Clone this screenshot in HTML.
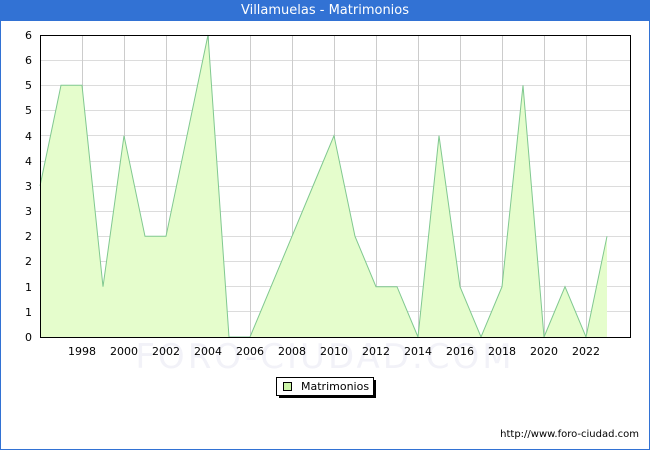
<!DOCTYPE html>
<html><head><style>
body{margin:0;width:650px;height:450px;overflow:hidden;font-family:"DejaVu Sans","Liberation Sans",sans-serif;background:#fff}
.frame{position:absolute;left:0;top:0;width:648px;height:448px;border:1px solid #3272d4}
.title{position:absolute;left:0;top:0;width:650px;height:21px;background:#3272d4;color:#fff;font-size:13px;text-align:center;line-height:22px}
</style></head><body>
<div class="frame"></div>
<div class="title">Villamuelas - Matrimonios</div>
<svg width="650" height="450" style="position:absolute;left:0;top:0" font-family="DejaVu Sans, Liberation Sans, sans-serif" font-size="11">
<g stroke="#dcdcdc" stroke-width="1">
<line x1="40" y1="60.5" x2="630" y2="60.5"/><line x1="40" y1="85.5" x2="630" y2="85.5"/><line x1="40" y1="110.5" x2="630" y2="110.5"/><line x1="40" y1="135.5" x2="630" y2="135.5"/><line x1="40" y1="161.5" x2="630" y2="161.5"/><line x1="40" y1="186.5" x2="630" y2="186.5"/><line x1="40" y1="211.5" x2="630" y2="211.5"/><line x1="40" y1="236.5" x2="630" y2="236.5"/><line x1="40" y1="261.5" x2="630" y2="261.5"/><line x1="40" y1="286.5" x2="630" y2="286.5"/><line x1="40" y1="311.5" x2="630" y2="311.5"/>
</g>
<g stroke="#cccccc"><line x1="82.5" y1="35" x2="82.5" y2="337"/><line x1="124.5" y1="35" x2="124.5" y2="337"/><line x1="166.5" y1="35" x2="166.5" y2="337"/><line x1="208.5" y1="35" x2="208.5" y2="337"/><line x1="250.5" y1="35" x2="250.5" y2="337"/><line x1="292.5" y1="35" x2="292.5" y2="337"/><line x1="334.5" y1="35" x2="334.5" y2="337"/><line x1="376.5" y1="35" x2="376.5" y2="337"/><line x1="418.5" y1="35" x2="418.5" y2="337"/><line x1="460.5" y1="35" x2="460.5" y2="337"/><line x1="502.5" y1="35" x2="502.5" y2="337"/><line x1="544.5" y1="35" x2="544.5" y2="337"/><line x1="586.5" y1="35" x2="586.5" y2="337"/></g>
<polygon fill="#e5fdcc" stroke="none" points="40,337 40,186 61,85.3 82,85.3 103,286.7 124,135.7 145,236.3 166,236.3 187,135.7 208,35 229,337 250,337 271,286.7 292,236.3 313,186 334,135.7 355,236.3 376,286.7 397,286.7 418,337 439,135.7 460,286.7 481,337 502,286.7 523,85.3 544,337 565,286.7 586,337 607,236.3 607,337"/>
<polyline fill="none" stroke="#80c890" stroke-width="1" points="40,186 61,85.3 82,85.3 103,286.7 124,135.7 145,236.3 166,236.3 187,135.7 208,35 229,337 250,337 271,286.7 292,236.3 313,186 334,135.7 355,236.3 376,286.7 397,286.7 418,337 439,135.7 460,286.7 481,337 502,286.7 523,85.3 544,337 565,286.7 586,337 607,236.3"/>
<text x="325" y="368" font-size="34" fill="#f2f2f8" text-anchor="middle" letter-spacing="3">FORO-CIUDAD.COM</text>
<rect x="40.5" y="35.5" width="590" height="302" fill="none" stroke="#000"/>
<g text-anchor="end" fill="#000"><text x="32" y="39">6</text><text x="32" y="64">6</text><text x="32" y="89">5</text><text x="32" y="114">5</text><text x="32" y="140">4</text><text x="32" y="165">4</text><text x="32" y="190">3</text><text x="32" y="215">3</text><text x="32" y="240">2</text><text x="32" y="265">2</text><text x="32" y="291">1</text><text x="32" y="316">1</text><text x="32" y="341">0</text></g>
<g text-anchor="middle"><text x="82" y="355">1998</text><text x="124" y="355">2000</text><text x="166" y="355">2002</text><text x="208" y="355">2004</text><text x="250" y="355">2006</text><text x="292" y="355">2008</text><text x="334" y="355">2010</text><text x="376" y="355">2012</text><text x="418" y="355">2014</text><text x="460" y="355">2016</text><text x="502" y="355">2018</text><text x="544" y="355">2020</text><text x="586" y="355">2022</text></g>
<rect x="279" y="380" width="97" height="18" fill="#000"/>
<rect x="276.5" y="377.5" width="97" height="18" fill="#fff" stroke="#000"/>
<rect x="283.5" y="382.5" width="8" height="8" fill="#ccf5a8" stroke="#000"/>
<text x="301" y="390">Matrimonios</text>
<text x="639" y="437" text-anchor="end" font-size="10">http://www.foro-ciudad.com</text>
</svg>
</body></html>
